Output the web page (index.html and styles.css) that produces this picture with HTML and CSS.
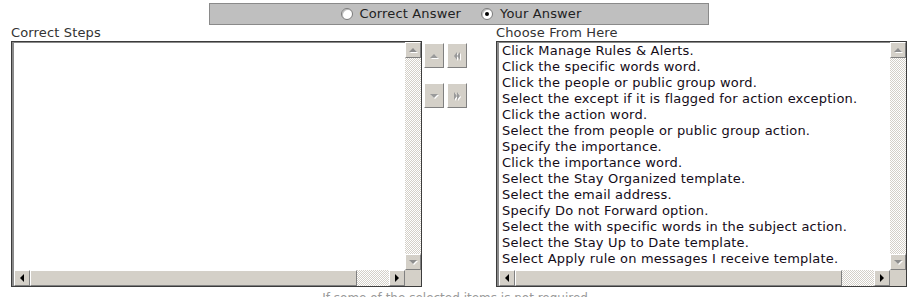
FILE: index.html
```html
<!DOCTYPE html>
<html>
<head>
<meta charset="utf-8">
<link rel="stylesheet" href="styles.css">
</head>
<body>
<div class="topbar">
  <label class="opt"><span class="radio"></span>Correct Answer</label>
  <label class="opt"><span class="radio checked"></span>Your Answer</label>
</div>
<div class="main">
  <div class="col">
    <div class="label">Correct Steps</div>
    <div class="listbox">
      <div class="lb-body">
        <div class="lb-content"></div>
        <div class="vscroll">
          <div class="sbtn"><span class="tri up"></span></div>
          <div class="track"></div>
          <div class="sbtn"><span class="tri down"></span></div>
        </div>
      </div>
      <div class="hscroll">
        <div class="sbtn"><span class="tri left"></span></div>
        <div class="thumb"></div>
        <div class="track"></div>
        <div class="sbtn"><span class="tri right"></span></div>
        <div class="corner"></div>
      </div>
    </div>
  </div>
  <div class="controls">
    <div class="btnrow">
      <div class="cbtn"><span class="ctri up"></span></div>
      <div class="cbtn"><span class="ctri left"></span><span class="ctri left"></span></div>
    </div>
    <div class="btnrow">
      <div class="cbtn"><span class="ctri down"></span></div>
      <div class="cbtn"><span class="ctri right"></span><span class="ctri right"></span></div>
    </div>
  </div>
  <div class="col right">
    <div class="label">Choose From Here</div>
    <div class="listbox">
      <div class="lb-body">
        <div class="lb-content">
          <div class="item">Click Manage Rules &amp; Alerts.</div>
          <div class="item">Click the specific words word.</div>
          <div class="item">Click the people or public group word.</div>
          <div class="item">Select the except if it is flagged for action exception.</div>
          <div class="item">Click the action word.</div>
          <div class="item">Select the from people or public group action.</div>
          <div class="item">Specify the importance.</div>
          <div class="item">Click the importance word.</div>
          <div class="item">Select the Stay Organized template.</div>
          <div class="item">Select the email address.</div>
          <div class="item">Specify Do not Forward option.</div>
          <div class="item">Select the with specific words in the subject action.</div>
          <div class="item">Select the Stay Up to Date template.</div>
          <div class="item">Select Apply rule on messages I receive template.</div>
        </div>
        <div class="vscroll">
          <div class="sbtn"><span class="tri up"></span></div>
          <div class="track"></div>
          <div class="sbtn"><span class="tri down"></span></div>
        </div>
      </div>
      <div class="hscroll">
        <div class="sbtn"><span class="tri left"></span></div>
        <div class="thumb"></div>
        <div class="track"></div>
        <div class="sbtn"><span class="tri right"></span></div>
        <div class="corner"></div>
      </div>
    </div>
  </div>
</div>
<div class="note">If some of the selected items is not required.</div>
</body>
</html>
```
FILE: styles.css
```css
html, body {
  margin: 0;
  padding: 0;
  background: #fff;
  font-family: "DejaVu Sans", Verdana, sans-serif;
  font-size: 13px;
  color: #222;
  overflow: hidden;
}
.topbar {
  box-sizing: border-box;
  width: 500px;
  height: 22px;
  margin: 3px 0 0 209px;
  background: #bfbfbf;
  border: 1px solid #8a8a8a;
  display: flex;
  justify-content: center;
  align-items: center;
  gap: 20px;
  padding-left: 4px;
  letter-spacing: 0.15px;
}
.opt {
  display: flex;
  align-items: center;
  color: #222;
  line-height: 16px;
}
.radio {
  box-sizing: border-box;
  width: 12px;
  height: 12px;
  border-radius: 50%;
  background: #fff;
  border: 1px solid #7a7a7a;
  box-shadow: inset 1px 1px 0 #bdbdbd;
  margin-right: 7px;
  position: relative;
}
.radio.checked::after {
  content: "";
  position: absolute;
  left: 3px;
  top: 3px;
  width: 4px;
  height: 4px;
  border-radius: 50%;
  background: #000;
}
.main {
  display: flex;
  align-items: flex-start;
  padding-left: 11px;
}
.col {
  width: 411px;
}
.col.right {
  margin-left: 29px;
}
.label {
  height: 16px;
  line-height: 16px;
  color: #333;
  letter-spacing: 0.15px;
}
.listbox {
  box-sizing: border-box;
  width: 411px;
  height: 246px;
  border: 1px solid #3c3c3c;
  box-shadow: inset 2px 1px 0 #8a8a8a;
  display: flex;
  flex-direction: column;
  padding: 0 0 0 2px;
  background: #fff;
}
.lb-body {
  flex: 1;
  display: flex;
  min-height: 0;
}
.lb-content {
  flex: 1;
  padding: 1px 0 0 3px;
  overflow: hidden;
  color: #140c18;
}
.item {
  height: 16px;
  line-height: 16px;
  white-space: nowrap;
  letter-spacing: 0.2px;
}
.vscroll {
  width: 16px;
  display: flex;
  flex-direction: column;
}
.track {
  flex: 1;
  background: repeating-conic-gradient(#ffffff 0 25%, #d4d0c8 0 50%) 0 0 / 2px 2px;
}
.sbtn {
  box-sizing: border-box;
  width: 16px;
  height: 16px;
  background: #d4d0c8;
  border-top: 1px solid #fff;
  border-left: 1px solid #fff;
  border-right: 1px solid #808080;
  border-bottom: 1px solid #808080;
  display: flex;
  align-items: center;
  justify-content: center;
}
.hscroll {
  height: 16px;
  display: flex;
}
.hscroll .thumb {
  box-sizing: border-box;
  width: 327px;
  height: 16px;
  background: #d4d0c8;
  border-top: 1px solid #fff;
  border-left: 1px solid #fff;
  border-right: 1px solid #808080;
  border-bottom: 1px solid #808080;
}
.hscroll .track {
  flex: 1;
}
.corner {
  width: 16px;
  background: #d4d0c8;
}
.tri {
  width: 0;
  height: 0;
}
.tri.up {
  border-left: 4px solid transparent;
  border-right: 4px solid transparent;
  border-bottom: 4px solid #8e8e8e;
  filter: drop-shadow(1px 1px 0 #fff);
}
.tri.down {
  border-left: 4px solid transparent;
  border-right: 4px solid transparent;
  border-top: 4px solid #8e8e8e;
  filter: drop-shadow(1px 1px 0 #fff);
}
.tri.left {
  border-top: 4px solid transparent;
  border-bottom: 4px solid transparent;
  border-right: 4px solid #000;
}
.tri.right {
  border-top: 4px solid transparent;
  border-bottom: 4px solid transparent;
  border-left: 4px solid #000;
}
.controls {
  margin: 18px 0 0 2px;
  display: flex;
  flex-direction: column;
  gap: 15px;
}
.btnrow {
  display: flex;
  gap: 3px;
}
.cbtn {
  box-sizing: border-box;
  width: 20px;
  height: 25px;
  background: #d4d0c8;
  border-top: 1px solid #fff;
  border-left: 1px solid #fff;
  border-right: 1px solid #808080;
  border-bottom: 1px solid #808080;
  display: flex;
  align-items: center;
  justify-content: center;
}
.ctri {
  width: 0;
  height: 0;
  filter: drop-shadow(1px 1px 0 #fff);
}
.ctri.up {
  border-left: 4px solid transparent;
  border-right: 4px solid transparent;
  border-bottom: 4px solid #9a9a9a;
}
.ctri.down {
  border-left: 4px solid transparent;
  border-right: 4px solid transparent;
  border-top: 4px solid #9a9a9a;
}
.ctri.left {
  border-top: 4px solid transparent;
  border-bottom: 4px solid transparent;
  border-right: 3px solid #9a9a9a;
}
.ctri.right {
  border-top: 4px solid transparent;
  border-bottom: 4px solid transparent;
  border-left: 3px solid #9a9a9a;
}
.note {
  margin-top: 4px;
  text-align: center;
  color: #9a9a9a;
  font-size: 12px;
  line-height: 14px;
}
```
